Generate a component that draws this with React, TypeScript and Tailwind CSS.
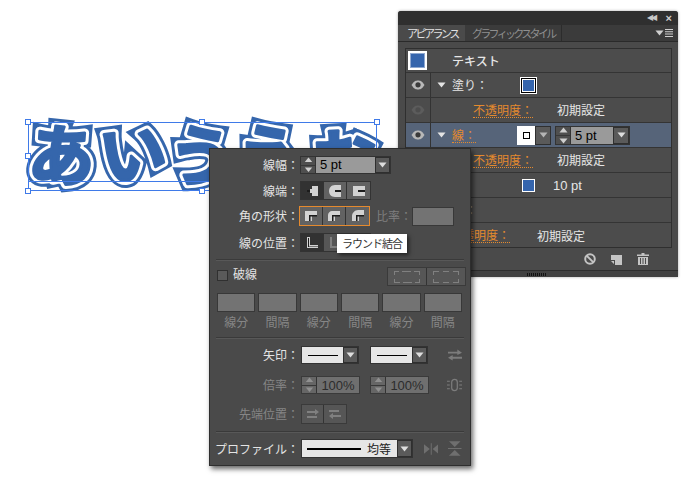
const jp = "font-['Noto_Sans_CJK_JP','Noto_Sans',sans-serif]";

const Caret = ({ up = false, c = '#d8d8d8' }: { up?: boolean; c?: string }) => (
  <svg width="9" height="6" viewBox="0 0 9 6"><path d={up ? 'M4.5 0.5L8.5 5.5H0.5Z' : 'M0.5 0.5H8.5L4.5 5.5Z'} fill={c} /></svg>
);

const Spin = ({ off = false }: { off?: boolean }) => (
  <div className={'w-[15px] h-full flex flex-col items-center justify-center gap-[2px] border-r border-[#333] ' + (off ? 'bg-[#666666]' : 'bg-[#4f4f4f]')}>
    <Caret up c={off ? '#909090' : '#d0d0d0'} />
    <div className="w-full h-px bg-[#383838]" />
    <Caret c={off ? '#909090' : '#d0d0d0'} />
  </div>
);

const Drop = ({ w = 'w-[16px]', c = '#dedede' }: { w?: string; c?: string }) => (
  <div className={w + ' h-full flex items-center justify-center bg-[#5a5a5a] border border-[#2f2f2f]'}>
    <Caret c={c} />
  </div>
);

const Label = ({ children, off = false }: { children: string; off?: boolean }) => (
  <div className={'w-[90px] shrink-0 pr-[1px] text-right text-[12px] leading-none whitespace-nowrap ' + (off ? 'text-[#868686]' : 'text-[#e4e4e4]')}>
    {children}
  </div>
);

const ToolBtn = ({ d, line, dark = false, off = false, w = 'w-[23px]', iw = 16 }: { d: string; line?: string; dark?: boolean; off?: boolean; w?: string; iw?: number }) => (
  <div className={w + ' h-full flex items-center justify-center border-r border-[#333] last:border-r-0 ' + (dark ? 'bg-[#323232]' : off ? 'bg-[#565656]' : 'bg-[#626262]')}>
    <svg width={iw} height="14" viewBox={`0 0 ${iw} 14`}>
      <path d={d} fill={off ? '#808080' : '#d2d2d2'} />
      {line && <path d={line} fill="#1c1c1c" />}
    </svg>
  </div>
);

const Field = () => <div className="flex-1 h-[19px] bg-[#737373] border border-[#383838]" />;

const Divider = () => <div className="h-px bg-[#3a3a3a] border-b border-[#585858] mx-[-2px] box-content" />;

const LineSelect = ({ w }: { w: string }) => (
  <div className="flex h-[18px] border border-[#333]">
    <div className={w + ' h-full bg-[#e6e6e6] flex items-center justify-center'}>
      <div className="w-[30px] h-px bg-black" />
    </div>
    <Drop w="w-[15px]" />
  </div>
);

const Percent = () => (
  <div className="flex h-[18px] border border-[#3a3a3a] bg-[#6f6f6f]">
    <Spin off />
    <div className="w-[42px] text-[13px] leading-[18px] text-center text-[#2c2c2c] font-['Liberation_Sans']">100%</div>
  </div>
);

const Eye = ({ dim = false }: { dim?: boolean }) => (
  <svg width="14" height="10" viewBox="0 0 14 10">
    <path d="M0.5 5C3 1 5 0.5 7 0.5S11 1 13.5 5C11 9 9 9.5 7 9.5S3 9 0.5 5Z" fill={dim ? '#5c5c5c' : '#b8b8b8'} />
    <circle cx="7" cy="4.8" r="2.6" fill={dim ? '#4d4d4d' : '#3a3a3a'} />
  </svg>
);

const Row = ({ eye, dim, tri, bg = 'bg-[#4c4c4c]', children }: { eye?: boolean; dim?: boolean; tri?: boolean; bg?: string; children?: React.ReactNode }) => (
  <div className={'h-[25px] shrink-0 flex items-center border-b border-[#343434] last:border-b-0 ' + bg}>
    <div className="w-[25px] h-full shrink-0 flex items-center justify-center border-r border-[#333]">
      {eye && <Eye dim={dim} />}
    </div>
    <div className="w-[21px] shrink-0 flex justify-center">{tri && <Caret c="#e4e4e4" />}</div>
    {children}
  </div>
);

const Orange = ({ children, cls }: { children: string; cls: string }) => (
  <span className={cls + ' text-[12px] leading-[14px] text-[#e58a2e] border-b border-dotted border-[#e58a2e] whitespace-nowrap'}>{children}</span>
);

const Value = ({ cls, children }: { cls: string; children: string }) => (
  <span className={cls + ' text-[12px] text-[#e6e6e6] leading-none whitespace-nowrap'}>{children}</span>
);

const glyphs = [
  { c: 'あ', x: 62, y: 180, r: 5 },
  { c: 'い', x: 133, y: 178, r: -8 },
  { c: 'う', x: 201, y: 181, r: 7 },
  { c: 'え', x: 268, y: 180, r: 4 },
  { c: 'お', x: 344, y: 184, r: -3 },
];

const Handle = ({ cls }: { cls: string }) => <div className={cls + ' absolute w-[6px] h-[6px] bg-white border border-[#3f7ae8]'} />;

const capA = 'M8 2H14V12H8V9H6V5H8Z';
const capB = 'M8 1C4 1 2 4 2 7S4 13 8 13H14V1Z';
const capC = 'M2 2H14V12H2Z';
const joinA = 'M2 2H14V7H9V12H2Z';
const joinB = 'M6 2H14V7H9V12H2V6C2 4 4 2 6 2Z';
const joinC = 'M8 1H14V7H9V12H2V7C2 4 5 1 8 1Z';
const joinLine = 'M6 6H14V7.5H7.5V12H6Z';
const dashA = 'M0 1H5V2H1V5H0ZM8 1H17V2H8ZM20 1H26V5H25V2H20ZM0 9H1V12H6V13H0ZM9 12H18V13H9ZM25 9H26V13H21V12H25Z';
const dashB = 'M0 1H6V2H1V5H0ZM10 1H16V2H10ZM20 1H26V5H25V2H20ZM0 9H1V12H6V13H0ZM10 12H16V13H10ZM25 9H26V13H20V12H25Z';
const arrR = 'M2 4H10V2L14 5L10 8V6H2ZM2 9H12V11H2Z';
const arrL = 'M2 3H12V5H2ZM14 8H6V6L2 9L6 12V10H14Z';

export default function App() {
  return (
    <div className={jp + ' relative w-[700px] h-[480px] bg-white overflow-hidden'}>
      {/* 文字アート */}
      <svg className="absolute left-0 top-0" width="400" height="210" viewBox="0 0 400 210">
        <defs>
          <g id="moji" fontFamily="'Noto Sans CJK JP', sans-serif" fontWeight="700" fontSize="66" textAnchor="middle">
            {glyphs.map((g) => (
              <text key={g.c} x={g.x} y={g.y} transform={`rotate(${g.r} ${g.x} ${g.y - 25})`}>{g.c}</text>
            ))}
          </g>
        </defs>
        <use href="#moji" fill="#3566ac" stroke="#3566ac" strokeWidth="15" strokeLinejoin="miter" strokeMiterlimit={6} />
        <use href="#moji" fill="#ffffff" stroke="#ffffff" strokeWidth="9" strokeLinejoin="round" />
        <use href="#moji" fill="#3566ac" stroke="#3566ac" strokeWidth="3" strokeLinejoin="round" />
      </svg>

      {/* 選択枠 */}
      <div className="absolute left-[28px] top-[122px] w-[349px] h-[69px] border border-[#3f7ae8]">
        <div className="absolute left-0 right-0 top-[58px] h-px bg-[#3f7ae8]" />
        <Handle cls="left-[-4px] top-[-4px]" />
        <Handle cls="left-[170px] top-[-4px]" />
        <Handle cls="right-[-4px] top-[-4px]" />
        <Handle cls="left-[-4px] top-[30px]" />
        <Handle cls="left-[-4px] bottom-[-4px]" />
        <Handle cls="left-[170px] bottom-[-4px]" />
      </div>

      {/* アピアランスパネル */}
      <div className="absolute left-[398px] top-[11px] w-[280px] h-[266px] flex flex-col bg-[#4a4a4a] rounded-t-[3px] shadow-[0_0_3px_rgba(0,0,0,0.35)]">
        <div className="h-[14px] shrink-0 flex items-center justify-end gap-[9px] pr-[6px] bg-[#2f2f2f] rounded-t-[3px]">
          <span className="text-[#c8c8c8] text-[8px] leading-none tracking-[-2px] font-['Liberation_Sans'] pr-[2px]">◀◀</span>
          <span className="text-[#d0d0d0] text-[11px] leading-none font-['Liberation_Sans'] font-bold">×</span>
        </div>
        <div className="h-[17px] shrink-0 flex items-stretch bg-[#3b3b3b] border-b border-[#2a2a2a]">
          <div className="w-[67px] shrink-0 pl-[9px] bg-[#4a4a4a] text-[#e2e2e2] text-[11px] leading-[17px] tracking-[-2.5px] whitespace-nowrap">アピアランス</div>
          <div className="w-[97px] shrink-0 pl-[7px] border-r border-[#2c2c2c] text-[#8f8f8f] text-[11px] leading-[17px] tracking-[-2.7px] whitespace-nowrap">グラフィックスタイル</div>
          <div className="flex-1 flex items-center justify-end pr-[5px] gap-px">
            <Caret c="#d0d0d0" />
            <svg width="8" height="8" viewBox="0 0 8 8"><path d="M0 0H8V1H0ZM0 2.3H8V3.3H0ZM0 4.6H8V5.6H0ZM0 6.9H8V7.9H0Z" fill="#d0d0d0" /></svg>
          </div>
        </div>
        <div className="mx-[7px] mt-[6px] w-[267px] h-[200px] flex flex-col overflow-hidden border border-[#2f2f2f] bg-[#4c4c4c]">
          <div className="h-[24px] shrink-0 flex items-center border-b border-[#343434]">
            <div className="w-[19px] h-[19px] ml-[2px] border-[2px] border-white bg-[#3565ad] shadow-[inset_0_0_0_1px_#8fa8d0]" />
            <span className="ml-[25px] text-[12px] font-medium text-[#e6e6e6] leading-none">テキスト</span>
          </div>
          <Row eye tri>
            <Value cls="">塗り：</Value>
            <div className="ml-[32px] w-[17px] h-[17px] border border-white bg-black p-px"><div className="w-full h-full bg-[#3565ad] border border-white" /></div>
          </Row>
          <Row eye dim>
            <Orange cls="ml-[21px]">不透明度：</Orange>
            <Value cls="ml-[24px]">初期設定</Value>
          </Row>
          <Row eye tri bg="bg-[#566479]">
            <Orange cls="">線：</Orange>
            <div className="ml-[41px] flex h-[19px] items-stretch">
              <div className="w-[18px] bg-white flex items-center justify-center"><div className="w-[7px] h-[7px] border border-black" /></div>
              <Drop w="w-[16px]" c="#b5b5b5" />
            </div>
            <div className="ml-[4px] flex h-[19px] items-stretch border border-[#333] bg-[#9a9a9a]">
              <Spin />
              <div className="w-[42px] pl-[4px] text-[13px] text-black leading-[17px] font-['Liberation_Sans']">5 pt</div>
              <Drop w="w-[16px]" />
            </div>
          </Row>
          <Row>
            <Orange cls="ml-[21px]">不透明度：</Orange>
            <Value cls="ml-[24px]">初期設定</Value>
          </Row>
          <Row>
            <div className="ml-[70px] w-[13px] h-[13px] border border-white bg-[#3565ad]" />
            <span className="ml-[18px] text-[13px] text-[#e6e6e6] leading-none font-['Liberation_Sans']">10 pt</span>
          </Row>
          <Row>
            <span className="ml-[13px] text-[12px] text-[#9a9a9a] leading-none">：</span>
          </Row>
          <Row>
            <Orange cls="ml-[-2px]">不透明度：</Orange>
            <Value cls="ml-[27px]">初期設定</Value>
          </Row>
        </div>
        <div className="h-[22px] shrink-0 flex items-center justify-end gap-[15px] pr-[29px]">
          <svg width="12" height="12" viewBox="0 0 12 12" fill="none" stroke="#c4c4c4" strokeWidth="2"><circle cx="6" cy="6" r="4.8" /><path d="M2.6 2.6L9.4 9.4" /></svg>
          <svg width="11" height="11" viewBox="0 0 11 11"><path d="M0 1H11V11H4V6H0ZM0 7H3V10Z" fill="#c4c4c4" /></svg>
          <svg width="12" height="12" viewBox="0 0 12 12"><path d="M4.5 0H7.5V1.5H12V3H0V1.5H4.5ZM1 4H11V12H1ZM3 5V11H4V5ZM5.5 5V11H6.5V5ZM8 5V11H9V5Z" fill="#c4c4c4" /></svg>
        </div>
        <div className="flex-1 flex justify-center items-center bg-[#404040] border-t border-[#2c2c2c]">
          <div className="w-[19px] h-[3px] ml-[-4px] bg-[repeating-linear-gradient(90deg,#111_0,#111_1px,transparent_1px,transparent_2px)]" />
        </div>
      </div>

      {/* 線パネル */}
      <div className="absolute left-[209px] top-[148px] w-[262px] h-[318px] flex flex-col px-[8px] bg-[#4a4a4a] border border-[#2e2e2e] shadow-[2px_3px_5px_rgba(0,0,0,0.6)]">
        <div className="ml-[-8px] mt-[7px] flex items-center h-[18px]">
          <Label>線幅：</Label>
          <div className="flex h-full border border-[#333] bg-[#9a9a9a]">
            <Spin />
            <div className="w-[59px] pl-[4px] text-[13px] text-black leading-[16px] font-['Liberation_Sans']">5 pt</div>
            <Drop w="w-[15px]" />
          </div>
        </div>
        <div className="ml-[-8px] mt-[7px] flex items-center h-[19px]">
          <Label>線端：</Label>
          <div className="flex h-full border border-[#333]">
            <ToolBtn d={capA} line="M3 6H6V8H3Z" dark />
            <ToolBtn d={capB} line="M8 6H14V8H8Z" />
            <ToolBtn d={capC} line="M7 6H14V8H7Z" />
          </div>
        </div>
        <div className="ml-[-8px] mt-[6px] flex items-center h-[20px]">
          <Label>角の形状：</Label>
          <div className="ml-[-1px] flex h-full border border-[#e58a2e]">
            <ToolBtn d={joinA} line={joinLine} />
            <ToolBtn d={joinB} line={joinLine} />
            <ToolBtn d={joinC} line={joinLine} />
          </div>
          <span className="ml-[6px] w-[36px] text-[12px] text-[#7f7f7f] leading-none whitespace-nowrap">比率：</span>
          <div className="w-[42px] h-[19px] bg-[#737373] border border-[#383838]" />
        </div>
        <div className="relative ml-[-8px] mt-[7px] flex items-center h-[19px]">
          <Label>線の位置：</Label>
          <div className="flex h-full border border-[#333]">
            <ToolBtn d="M3 1H6V9H14V12H3Z" line="M4 2H5V10.5H14V11H4Z" dark />
            <ToolBtn d="M3 1H5V10H14V12H3Z" off />
            <ToolBtn d="M3 1H5V10H14V12H3Z" off />
          </div>
          <div className="absolute left-[127px] top-[1px] w-[70px] h-[19px] bg-white text-[#333] text-[11px] tracking-[-1px] leading-[19px] text-center whitespace-nowrap shadow-[2px_2px_4px_rgba(0,0,0,0.55)]">ラウンド結合</div>
        </div>
        <div className="mt-[7px]"><Divider /></div>
        <div className="mt-[6px] flex items-start h-[19px]">
          <div className="ml-[-1px] mt-[3px] w-[11px] h-[11px] bg-[#5a5a5a] border border-[#303030]" />
          <span className="ml-[5px] mt-px text-[12px] text-[#e4e4e4] leading-none">破線</span>
          <div className="ml-auto mr-[-4px] flex h-[19px] border border-[#3a3a3a]">
            <ToolBtn d={dashA} off w="w-[39px]" iw={26} />
            <ToolBtn d={dashB} off w="w-[38px]" iw={26} />
          </div>
        </div>
        <div className="ml-[-1px] mt-[7px] flex gap-[3px]">
          <Field /><Field /><Field /><Field /><Field /><Field />
        </div>
        <div className="ml-[-1px] mt-[3px] flex gap-[3px]">
          {['線分', '間隔', '線分', '間隔', '線分', '間隔'].map((t, i) => (
            <span key={i} className="flex-1 text-center text-[12px] leading-[14px] text-[#868686]">{t}</span>
          ))}
        </div>
        <div className="mt-[8px]"><Divider /></div>
        <div className="ml-[-8px] mt-[7px] flex items-center h-[18px]">
          <Label>矢印：</Label>
          <div className="ml-[1px]"><LineSelect w="w-[41px]" /></div>
          <div className="ml-[11px]"><LineSelect w="w-[41px]" /></div>
          <svg className="ml-[20px]" width="15" height="12" viewBox="0 0 15 12"><path d="M0 2.5H10V0L15 3.5L10 6V4.5H0ZM15 8H5V6L0 9L5 12V10H15Z" fill="#7c7c7c" /></svg>
        </div>
        <div className="ml-[-8px] mt-[12px] flex items-center h-[18px]">
          <Label off>倍率：</Label>
          <div className="ml-[1px]"><Percent /></div>
          <div className="ml-[10px]"><Percent /></div>
          <svg className="ml-[18px]" width="16" height="14" viewBox="0 0 16 14" fill="none" stroke="#7c7c7c" strokeWidth="1.3"><rect x="5" y="1" width="6" height="12" rx="3" /><path d="M0 3H3M0 7H3M0 11H3M13 3H16M13 7H16M13 11H16" /></svg>
        </div>
        <div className="ml-[-8px] mt-[10px] flex items-center h-[20px]">
          <Label off>先端位置：</Label>
          <div className="ml-[1px] flex h-full border border-[#3a3a3a]">
            <ToolBtn d={arrR} off w="w-[22px]" />
            <ToolBtn d={arrL} off w="w-[22px]" />
          </div>
        </div>
        <div className="mt-[7px]"><Divider /></div>
        <div className="ml-[-8px] mt-[6px] flex items-center h-[19px]">
          <Label>プロファイル：</Label>
          <div className="ml-[1px] flex h-full border border-[#333]">
            <div className="w-[95px] h-full bg-[#e6e6e6] flex items-center pl-[5px]">
              <div className="w-[54px] h-[2px] bg-black" />
              <span className="ml-[6px] text-[12px] text-[#222] leading-none whitespace-nowrap">均等</span>
            </div>
            <Drop w="w-[15px]" />
          </div>
          <svg className="ml-[11px]" width="15" height="12" viewBox="0 0 15 12"><path d="M0 1L6 6L0 11ZM15 1L9 6L15 11ZM7 0H8V12H7Z" fill="#6f6f6f" /></svg>
          <svg className="ml-[10px]" width="14" height="15" viewBox="0 0 14 15"><path d="M1 0H13L7 6ZM1 15H13L7 9ZM0 7H14V8H0Z" fill="#6f6f6f" /></svg>
        </div>
      </div>
    </div>
  );
}
